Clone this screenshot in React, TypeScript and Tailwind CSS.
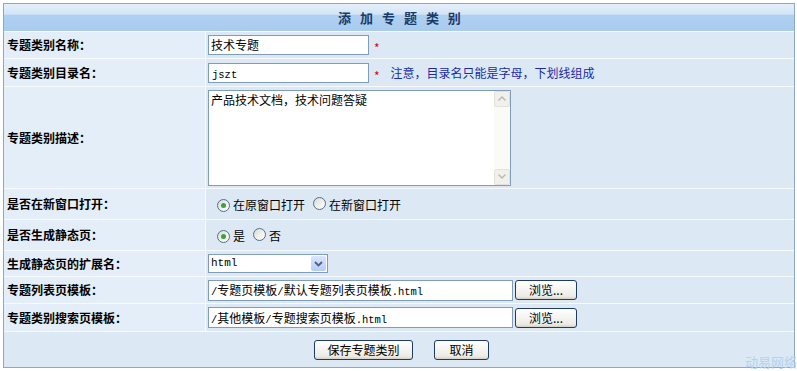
import React from "react";

const cjk = '"Noto Sans CJK SC", "Noto Sans", sans-serif';
const mono = '"Liberation Mono", "Noto Sans CJK SC", monospace';

function Mixed({ text }: { text: string }) {
  const parts = text.match(/[\x00-\x7f]+|[^\x00-\x7f]+/g) || [];
  return (
    <span className="whitespace-nowrap leading-[16px]">
      {parts.map((p, i) =>
        /^[\x00-\x7f]+$/.test(p) ? (
          <span key={i} className="text-[10.5px]" style={{ fontFamily: mono }}>
            {p}
          </span>
        ) : (
          <span key={i} className="text-[12px]" style={{ fontFamily: cjk }}>
            {p}
          </span>
        )
      )}
    </span>
  );
}

function Radio({ checked }: { checked?: boolean }) {
  return (
    <span className="inline-flex h-[13px] w-[13px] shrink-0 items-center justify-center rounded-full border border-[#4f6f8f] bg-[linear-gradient(135deg,#dcdcd5,#ffffff)]">
      {checked && <span className="h-[5px] w-[5px] rounded-full bg-[#3aa43a]" />}
    </span>
  );
}

function XPButton({ children, w }: { children: React.ReactNode; w: string }) {
  return (
    <div
      className={`${w} flex h-[20px] items-center justify-center rounded-[3px] border border-[#1f3b63] bg-[linear-gradient(#ffffff,#ecebe6_85%,#d6d0c5)] text-[12px] leading-none text-black`}
      style={{ fontFamily: cjk }}
    >
      {children}
    </div>
  );
}

function Row({
  label,
  h,
  children,
}: {
  label: string;
  h: string;
  children: React.ReactNode;
}) {
  return (
    <div className={`flex ${h} gap-px`}>
      <div className="flex w-[201px] shrink-0 items-center bg-[#e4eef8] pl-[3px] text-[12px] font-bold text-black">
        {label}
      </div>
      <div className="flex flex-1 items-center bg-[#dce9f5] pl-[2px]">{children}</div>
    </div>
  );
}

export default function App() {
  return (
    <div className="relative h-[371px] w-[797px] overflow-hidden bg-white" style={{ fontFamily: cjk }}>
      <div className="ml-[3px] mt-[3px] w-[792px] border border-[#8ba8c7] bg-[#f7fbfe]">
        <div className="flex flex-col gap-px">
          <div className="flex h-[27px] items-center justify-center bg-[linear-gradient(#e6f0fb_0%,#d2e4f6_38%,#afd0f1_42%,#a9cbee_100%)] pl-[4px] text-[13px] font-bold tracking-[3px] text-[#1a3a68]">
            添 加 专 题 类 别
          </div>
          <Row label="专题类别名称：" h="h-[26px]">
            <div className="flex h-[20px] w-[161px] items-center border border-[#7f9db9] bg-white pl-[2px] text-[12px] text-black">
              技术专题
            </div>
            <span className="ml-[5px] mt-[6px] text-[12px] text-[#e00000]">*</span>
          </Row>
          <Row label="专题类别目录名：" h="h-[27px]">
            <div className="flex h-[20px] w-[161px] items-center border border-[#7f9db9] bg-white pl-[3px] text-black">
              <Mixed text="jszt" />
            </div>
            <span className="ml-[5px] mt-[6px] text-[12px] text-[#e00000]">*</span>
            <span className="ml-[11px] text-[12px] text-[#1a2aa8]">注意，目录名只能是字母，下划线组成</span>
          </Row>
          <Row label="专题类别描述：" h="h-[101px]">
            <div className="flex h-[96px] w-[303px] border border-[#7f9db9] bg-white">
              <div className="flex-1 pl-[2px] pt-[1px] text-[12px] leading-[16px] text-black">
                产品技术文档，技术问题答疑
              </div>
              <div className="flex w-[16px] flex-col justify-between bg-[#fafaf6]">
                <div className="flex h-[16px] items-center justify-center rounded-[2px] border border-[#e2e1da] bg-[#f1f0ea]">
                  <svg width="8" height="5" viewBox="0 0 8 5">
                    <path d="M0.5 4.5 L4 1 L7.5 4.5" fill="none" stroke="#b9b8b0" strokeWidth="1.3" />
                  </svg>
                </div>
                <div className="flex h-[16px] items-center justify-center rounded-[2px] border border-[#e2e1da] bg-[#f1f0ea]">
                  <svg width="8" height="5" viewBox="0 0 8 5">
                    <path d="M0.5 0.5 L4 4 L7.5 0.5" fill="none" stroke="#b9b8b0" strokeWidth="1.3" />
                  </svg>
                </div>
              </div>
            </div>
          </Row>
          <Row label="是否在新窗口打开：" h="h-[30px]">
            <div className="flex items-center pl-[9px] pt-[2px] text-[12px] text-black">
              <Radio checked />
              <span className="ml-[3px]">在原窗口打开</span>
              <span className="ml-[8px]">
                <Radio />
              </span>
              <span className="ml-[3px]">在新窗口打开</span>
            </div>
          </Row>
          <Row label="是否生成静态页：" h="h-[30px]">
            <div className="flex items-center pl-[9px] pt-[2px] text-[12px] text-black">
              <Radio checked />
              <span className="ml-[3px]">是</span>
              <span className="ml-[8px]">
                <Radio />
              </span>
              <span className="ml-[3px]">否</span>
            </div>
          </Row>
          <Row label="生成静态页的扩展名：" h="h-[25px]">
            <div className="flex h-[19px] w-[120px] items-center border border-[#7f9db9] bg-white">
              <span className="flex-1 pl-[2px] text-[11px] text-black" style={{ fontFamily: mono }}>
                html
              </span>
              <div className="m-px flex h-[15px] w-[15px] items-center justify-center rounded-[2px] bg-[linear-gradient(#dbe6fd,#b6cbf6)]">
                <svg width="9" height="6" viewBox="0 0 9 6">
                  <path d="M1 1 L4.5 4.5 L8 1" fill="none" stroke="#4d6185" strokeWidth="1.8" />
                </svg>
              </div>
            </div>
          </Row>
          <Row label="专题列表页模板：" h="h-[26px]">
            <div className="flex h-[21px] w-[305px] items-center border border-[#7f9db9] bg-white pl-[2px] text-black">
              <Mixed text="/专题页模板/默认专题列表页模板.html" />
            </div>
            <div className="ml-[2px]">
              <XPButton w="w-[62px]">浏览...</XPButton>
            </div>
          </Row>
          <Row label="专题类别搜索页模板：" h="h-[27px]">
            <div className="flex h-[21px] w-[305px] items-center border border-[#7f9db9] bg-white pl-[2px] text-black">
              <Mixed text="/其他模板/专题搜索页模板.html" />
            </div>
            <div className="ml-[2px]">
              <XPButton w="w-[62px]">浏览...</XPButton>
            </div>
          </Row>
          <div className="flex h-[35px] items-start justify-center gap-[21px] bg-[#dce9f5] pl-[5px] pt-[8px]">
            <XPButton w="w-[99px]">保存专题类别</XPButton>
            <XPButton w="w-[55px]">取消</XPButton>
          </div>
        </div>
      </div>
      <div className="absolute left-[745px] top-[355px] whitespace-nowrap text-[13px] leading-none text-[#b5d1ee]">
        动易网络
      </div>
    </div>
  );
}
